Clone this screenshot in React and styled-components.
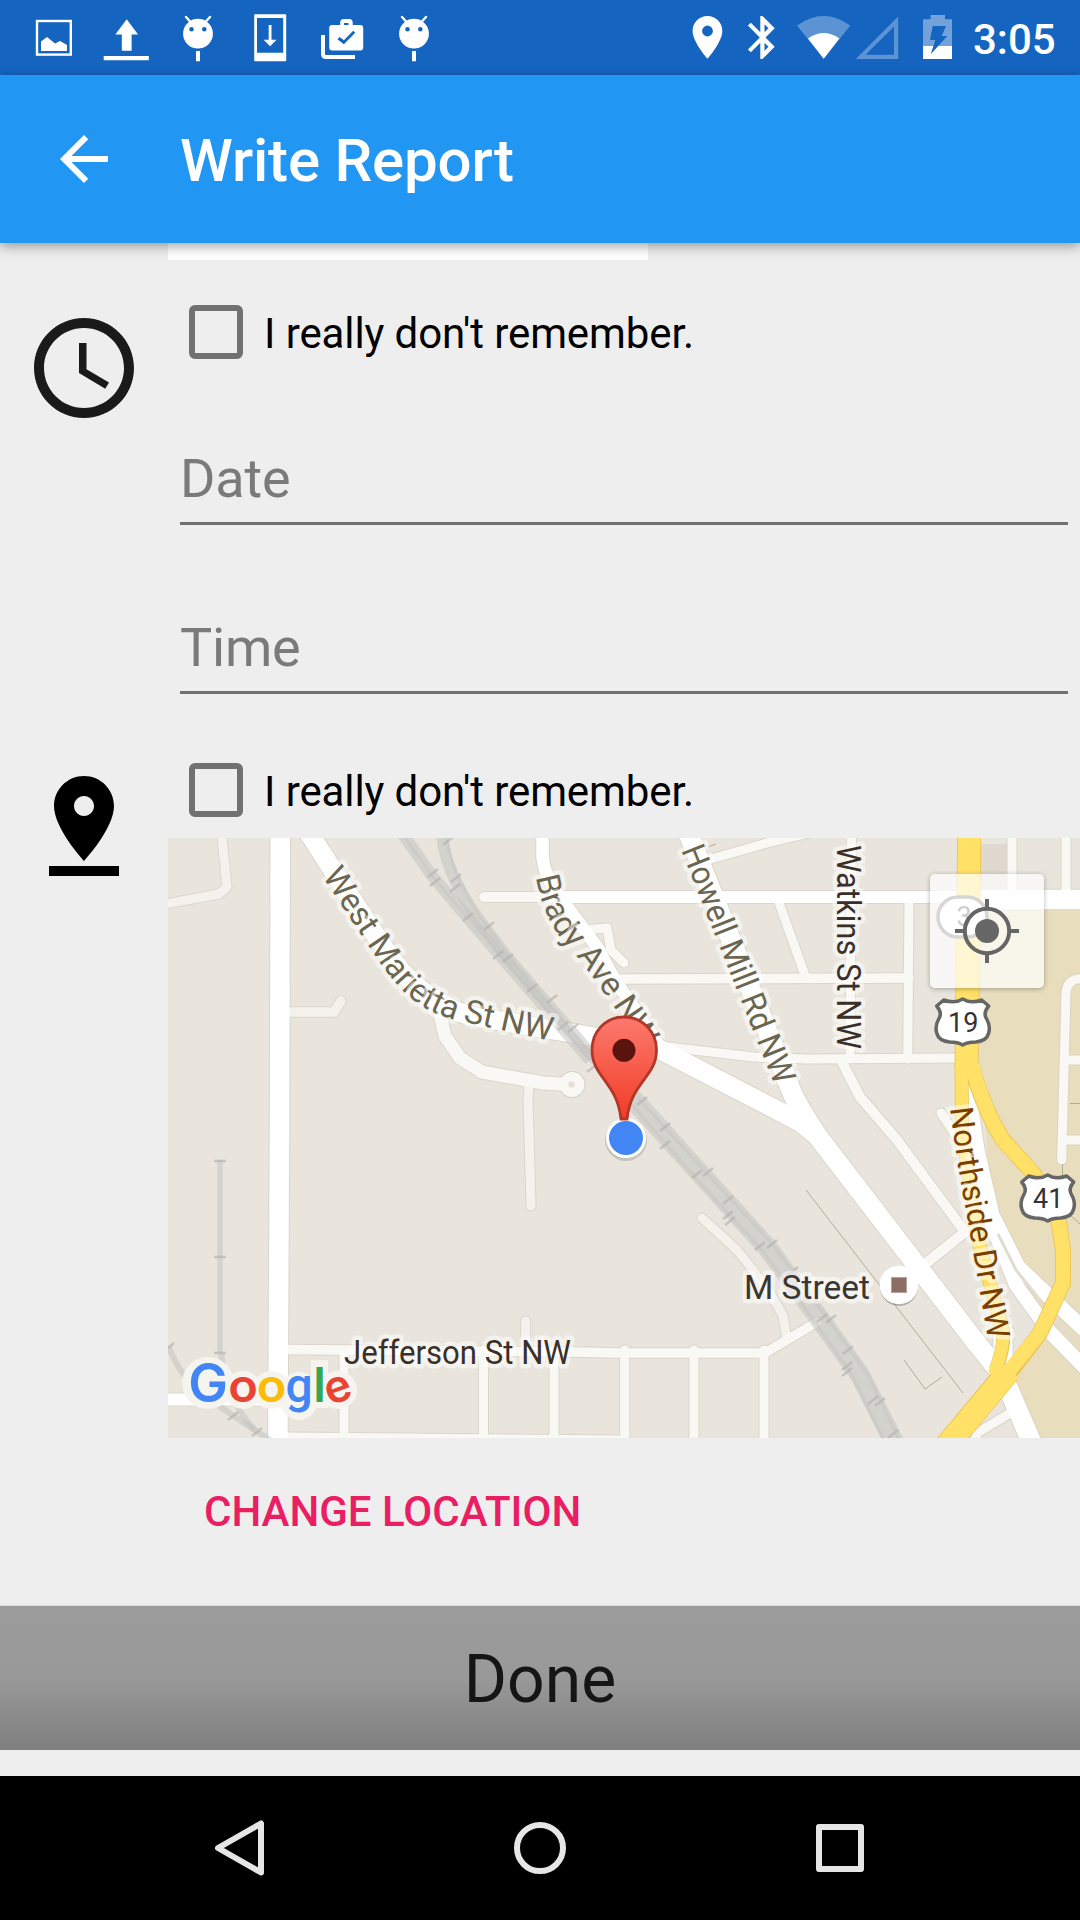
import React from "react";
import styled, { createGlobalStyle } from "styled-components";

const GlobalStyle = createGlobalStyle`
  *, *::before, *::after { box-sizing: border-box; }
  body { margin: 0; background: #eee; font-family: Roboto, "Noto Sans", sans-serif; }
`;

const Screen = styled.div`
  width: 1080px;
  height: 1920px;
  display: flex;
  flex-direction: column;
  overflow: hidden;
  background: #eeeeee;
`;

const StatusBar = styled.header`
  flex: none;
  height: 75px;
  display: flex;
  justify-content: space-between;
  padding: 0 25px 0 18px;
  background: #1565c0;
  color: #fff;
`;

const StatusGroup = styled.div`
  display: flex;
`;

const StatusSvg = styled.svg`
  display: block;
  width: ${(p) => p.$w}px;
  height: 75px;
`;

const Clock = styled.span`
  margin-left: 8px;
  width: 82px;
  font-size: 42px;
  font-weight: 500;
  line-height: 79px;
  white-space: nowrap;
`;

const AppBar = styled.div`
  flex: none;
  height: 168px;
  display: flex;
  align-items: center;
  padding-left: 48px;
  background: #2196f3;
  color: #fff;
  box-shadow: 0 3px 12px rgba(0, 0, 0, 0.38);
  z-index: 1;
`;

const BackIcon = styled.svg`
  width: 72px;
  height: 72px;
`;

const Title = styled.h1`
  margin: 3px 0 0 60px;
  font-size: 60px;
  line-height: 70px;
  font-weight: 500;
  letter-spacing: -0.2px;
`;

const Content = styled.main`
  flex: 1;
  min-height: 0;
  display: flex;
  flex-direction: column;
`;

const PhotoEdge = styled.div`
  flex: none;
  width: 480px;
  height: 17px;
  margin-left: 168px;
  background: #fff;
`;

const Section = styled.section`
  display: grid;
  grid-template-columns: 168px 912px;
  padding-top: ${(p) => p.$top}px;
`;

const SectionIcon = styled.svg`
  width: 120px;
  height: 120px;
  margin: 24px 0 0 24px;
  fill: ${(p) => p.$color};
`;

const CheckRow = styled.label`
  display: flex;
  align-items: center;
  height: 96px;
  padding-left: 21px;
  font-size: 42px;
  line-height: 50px;
  letter-spacing: -0.1px;
  color: #000;
`;

const Box = styled.span`
  width: 54px;
  height: 54px;
  margin-right: 21px;
  border: 6px solid #717171;
  border-radius: 6px;
`;

const CheckText = styled.span`
  padding-top: 4px;
`;

const Field = styled.div`
  height: 145px;
  margin: 0 12px ${(p) => p.$gap || 0}px 12px;
  padding-bottom: 12px;
  display: flex;
  align-items: flex-end;
  border-bottom: 3px solid #717171;
  font-size: 54px;
  line-height: 63px;
  letter-spacing: -0.2px;
  color: #7a7a7a;
`;

const MapFrame = styled.div`
  position: relative;
  width: 912px;
  height: 600px;
  overflow: hidden;
`;

const MapSvg = styled.svg`
  display: block;
  width: 912px;
  height: 600px;
`;

const LocateButton = styled.button`
  position: absolute;
  top: 36px;
  right: 36px;
  width: 114px;
  height: 114px;
  padding: 0;
  border: 0;
  border-radius: 5px;
  background: rgba(255, 255, 255, 0.7);
  box-shadow: 0 1px 5px rgba(0, 0, 0, 0.3);
`;

const TextButton = styled.button`
  display: block;
  margin: 0 0 0 36px;
  padding: 2px 0 0;
  height: 146px;
  border: 0;
  background: none;
  font: 500 42px/50px Roboto, sans-serif;
  color: #e91e63;
`;

const DoneButton = styled.button`
  flex: none;
  height: 144px;
  margin: 22px 0 0;
  padding: 3px 0 0 0;
  border: 0;
  background: linear-gradient(#9b9b9b 0%, #999 50%, #8c8c8c 74%, #7f7f7f 100%);
  box-shadow: 0 -1px 1px rgba(0, 0, 0, 0.08);
  font: 400 66px/78px Roboto, sans-serif;
  color: #151515;
`;

const NavBar = styled.nav`
  flex: none;
  height: 144px;
  display: flex;
  justify-content: center;
  align-items: center;
  gap: 200px;
  background: #000;
`;

const NavSvg = styled.svg`
  width: 100px;
  height: 100px;
  fill: none;
  stroke: #e6e6e6;
  stroke-width: 6;
  stroke-linejoin: round;
`;

/* ---------- status icons ---------- */

const LollipopIcon = () => (
  <StatusSvg $w={72} viewBox="162 0 72 75">
    <path
      fillRule="evenodd"
      fill="#fff"
      d="M198 18.8a14.9 14.9 0 1 1 0 29.8a14.9 14.9 0 1 1 0-29.8zM191.5 27a2.3 2.3 0 1 0 0 4.6a2.3 2.3 0 1 0 0-4.6zM204.3 27a2.3 2.3 0 1 0 0 4.6a2.3 2.3 0 1 0 0-4.6zM196 51h4v10.3h-4z"
    />
    <path d="M186 17l5 5.5M210 17l-5 5.5" stroke="#fff" strokeWidth="2.4" strokeLinecap="round" />
  </StatusSvg>
);

const NotificationIcons = () => (
  <StatusGroup>
    <StatusSvg $w={72} viewBox="18 0 72 75">
      <rect x="37" y="21" width="33.8" height="33.6" fill="none" stroke="#fff" strokeWidth="2.4" />
      <path d="M41 41.5l6-4.5 8 6.5 5-2.5 7 4v6H41z" fill="#fff" />
    </StatusSvg>
    <StatusSvg $w={72} viewBox="90 0 72 75">
      <path d="M126.7 19.2l11.4 15.4h-6.5v16.2h-9.8V34.6h-6.5zM103.7 56h45.1v4.3h-45.1z" fill="#fff" />
    </StatusSvg>
    <LollipopIcon />
    <StatusSvg $w={72} viewBox="234 0 72 75">
      <path
        fillRule="evenodd"
        fill="#fff"
        d="M255 14.3h30.4q.8 0 .8.8v45.3q0 .8-.8.8H255q-.8 0-.8-.8V15.1q0-.8.8-.8zM257 18v34.7h26.2V18zM268.7 25h2.8v14.7h5l-6.4 6.5-6.4-6.5h5z"
      />
    </StatusSvg>
    <StatusSvg $w={72} viewBox="306 0 72 75">
      <path
        fillRule="evenodd"
        fill="#fff"
        d="M332.200 25h8v-2.500q0-3.500 3.500-3.500h5.500q3.500 0 3.500 3.500V25h7.500q3 0 3 3v19.500q0 3-3 3h-28q-3 0-3-3V28q0-3 3-3zM344 23v2h4.500v-2zM339.700 36.900l-2.300 2.400 6.500 5 11.300-11.500-2-2.100-9.300 9.600z"
      />
      <path d="M323 35v19q0 3 3 3h29" fill="none" stroke="#fff" strokeWidth="4" />
    </StatusSvg>
    <LollipopIcon />
  </StatusGroup>
);

const SystemIcons = () => (
  <StatusGroup>
    <StatusSvg $w={53} viewBox="681 0 53 75">
      <path
        fillRule="evenodd"
        fill="#fff"
        d="M707.500 16c-8.300 0-14.900 6.500-14.900 14.900 0 11.100 14.900 27.800 14.900 27.800s14.800-16.700 14.800-27.800C722.300 22.500 715.700 16 707.500 16zM707.500 25.600a5.400 5.400 0 1 1 0 10.800a5.400 5.400 0 1 1 0-10.800z"
      />
    </StatusSvg>
    <StatusSvg $w={54} viewBox="734 0 54 75">
      <path
        fillRule="evenodd"
        fill="#fff"
        d="M774.700 28.200L762.500 16H760.300v16.200L750.800 22.700 747.900 25.600 759.800 37.500 747.900 49.400 750.800 52.300 760.300 42.800V59h2.200L774.700 46.800 765.500 37.500zM764.500 24.200l4 4-4 4zM768.500 46.800l-4 4v-8z"
      />
    </StatusSvg>
    <StatusSvg $w={65} viewBox="788 0 65 75">
      <path d="M797 25.600Q823.700 6.500 850.300 25.600L823.700 58.700z" fill="#fff" fillOpacity=".3" />
      <path d="M808 38.500Q823.700 27.500 839.400 38.500L823.700 58.700z" fill="#fff" />
    </StatusSvg>
    <StatusSvg $w={57} viewBox="853 0 57 75">
      <path fillRule="evenodd" d="M898.200 16.500V59h-42.400zM894 26.500L865.500 54.700H894z" fill="#fff" fillOpacity=".3" />
    </StatusSvg>
    <StatusSvg $w={55} viewBox="910 0 55 75">
      <path
        d="M923 19.300h7.500V15h14.500v4.300h7V46H938.200L947.300 36H941.700L946 26H932.700L930 40H935.300L933.400 46H923z"
        fill="#fff"
        fillOpacity=".4"
      />
      <path d="M923 46H933.400L930.700 54.300L938.200 46H952V59H923z" fill="#fff" />
    </StatusSvg>
    <Clock>3:05</Clock>
  </StatusGroup>
);

/* ---------- map ---------- */

const minorRoads = [
  ["M222 830V838L227 887L219 894L160 905", 9, "#f5f2ed"],
  ["M285 1012H334L341 1001", 9.5, "#f5f2ed"],
  ["M529 1084L528 1100L531 1206", 9, "#f5f2ed"],
  ["M702 1218L737 1250Q770 1290 783 1316L787 1340", 9, "#f5f2ed"],
  ["M525.700 1321V1352", 9, "#f5f2ed"],
  ["M484 897H560", 10, "#f9f8f4"],
  ["M440 1015L445 1036L460 1058L482 1072L543 1083L572 1084.500", 13, "#f9f8f4"],
  ["M583 930L607 928L611 950L624 963", 9, "#f9f8f4"],
  ["M620 979L909 978", 9.500, "#f9f8f4"],
  ["M778 900L806 978", 9, "#f9f8f4"],
  ["M909 900L907.700 1059", 9, "#f9f8f4"],
  ["M660 1046L753 1057L807 1059L957 1058", 9, "#f9f8f4"],
  ["M842 1062L860 1097L897 1140L965 1232L925 1264", 10, "#f9f8f4"],
  ["M704 861L767 843L850 823", 9, "#f9f8f4"],
  ["M851.500 830L850 1058", 9, "#f9f8f4"],
  ["M941 1113L960 1142", 9, "#f9f8f4"],
  ["M1012 830V895", 9, "#f9f8f4"],
  ["M1066 830V895", 9, "#f9f8f4"],
  ["M1085 979Q1068 977 1066 992L1061.700 1160", 9, "#f9f8f4"],
  ["M1065 1060H1090", 9, "#f9f8f4"],
  ["M1063 1140H1090", 9, "#f9f8f4"],
  ["M283 1349.500L573 1352L620 1353H765L817 1322", 9.500, "#f9f8f4"],
  ["M344 1350V1440", 9, "#f9f8f4"],
  ["M483.500 1350V1440", 9, "#f9f8f4"],
  ["M554 1350V1440", 9, "#f9f8f4"],
  ["M624.700 1350V1445", 9, "#f9f8f4"],
  ["M694 1350V1445", 9, "#f9f8f4"],
  ["M764 1350V1445", 9, "#f9f8f4"],
  ["M285 1437L622 1440", 9, "#f9f8f4"],
  ["M1012 1412L977 1433L974 1445", 9, "#f9f8f4"],
];

const whiteRoads = [
  ["M280.300 830L279.500 1130L277.800 1445", 19.500],
  ["M307 830L341 883L392 960Q425 1002 470 1016L595 1037L657 1048L800 1122L815 1134", 19],
  ["M542.500 830V858Q545 878 560 897L597 947L615 980L660 1047", 12.500],
  ["M560 897H985", 12],
  ["M981 899.500H1090", 19.500],
  ["M687 830L793 1095Q805 1118 819 1138L978 1345L1003 1376L1034 1448", 19.500],
  ["M160 1399.500H270", 12],
  ["M968 1090L977 1150L992 1215L1018 1267L1090 1335", 15],
  ["M978 1160L992 1225L1016 1285L1050 1332L1090 1373", 14],
  ["M1003 1330V1358", 19],
];

const railTicks = [
  [433, 873], [435, 882], [468, 917], [498, 955], [508, 958], [532, 988], [552, 999],
  [448, 841], [456, 878], [455, 888], [489, 926], [563, 1026], [573, 1028], [592, 1068],
  [642, 1101], [665, 1127], [665, 1145], [697, 1174], [708, 1172], [728, 1200], [728, 1215], [730, 1221],
  [760, 1246], [772, 1244], [793, 1271], [822, 1318], [831, 1319], [848, 1350], [847, 1366], [847, 1372],
  [873, 1400], [880, 1402], [893, 1434], [233, 1416], [257, 1432], [169, 1347],
];

const Road = ({ d, width, color }) => (
  <path d={d} fill="none" stroke={color} strokeWidth={width} strokeLinecap="round" strokeLinejoin="round" />
);

const Shield = ({ x, y, children }) => (
  <g transform={`translate(${x} ${y})`}>
    <path
      d="M0 -22Q-8 -17 -19 -21L-26 -15Q-20 -8 -24 -2Q-28 5 -26 12Q-24 20 -13 21Q-5 21 0 24Q5 21 13 21Q24 20 26 12Q28 5 24 -2Q20 -8 26 -15L19 -21Q8 -17 0 -22Z"
      fill="#fff"
      stroke="#666"
      strokeWidth="3.500"
      strokeLinejoin="round"
    />
    <text textAnchor="middle" x="0.500" y="11" fontSize="27" fill="#333">
      {children}
    </text>
  </g>
);

const MapLabel = styled.text`
  font-family: Roboto, sans-serif;
  font-size: ${(p) => p.$size || 32}px;
  fill: ${(p) => p.$color};
  stroke: rgba(255, 255, 255, 0.5);
  stroke-width: 9px;
  stroke-linejoin: round;
  paint-order: stroke;
  letter-spacing: ${(p) => p.$spacing || 0}px;
`;

const LogoLetter = styled.text`
  font-family: ${(p) => p.$font}, sans-serif;
  font-size: ${(p) => p.$size}px;
  font-weight: ${(p) => p.$weight};
  fill: ${(p) => p.$color};
  text-anchor: middle;
`;

const logoLetters = [
  ["G", 208, 1402, "#4285f4", "Inter", 53, 600, 0],
  ["o", 243, 1402, "#ea4335", "Inter", 46, 600, 0],
  ["o", 271.5, 1402, "#fbbc05", "Inter", 46, 600, 0],
  ["g", 299, 1402, "#4285f4", "Roboto", 48, 500, 0],
  ["l", 319.5, 1402, "#34a853", "Inter", 48, 600, 0],
  ["e", 338, 1402, "#ea4335", "Inter", 45, 600, -20],
];

const Logo = () => (
  <g>
    <g fill="#f5f4ef">
      <circle cx="208" cy="1383" r="26" />
      <circle cx="243" cy="1390" r="19" />
      <circle cx="271.500" cy="1390" r="19" />
      <circle cx="299" cy="1390" r="18" />
      <circle cx="299" cy="1402" r="18" />
      <rect x="311" y="1360" width="17" height="48" />
      <circle cx="338" cy="1390" r="19" />
    </g>
    {logoLetters.map(([ch, x, y, color, font, size, weight, turn], i) => (
      <LogoLetter
        key={i}
        x={x}
        y={y}
        $color={color}
        $font={font}
        $size={size}
        $weight={weight}
        transform={
          ch === "o"
            ? `translate(${x} 0) scale(1.06 1) translate(${-x} 0)`
            : turn
              ? `rotate(${turn} ${x} ${y - 12.5})`
              : undefined
        }
      >
        {ch}
      </LogoLetter>
    ))}
  </g>
);

const MapView = () => (
  <MapSvg viewBox="168 838 912 600" fontFamily="Roboto, sans-serif">
    <defs>
      <linearGradient id="pinFill" x1="0" y1="0" x2="0" y2="1">
        <stop offset="0" stopColor="#fc7a6d" />
        <stop offset="1" stopColor="#f23c27" />
      </linearGradient>
      <path id="marietta" d="M322 876L366 942Q392 983 412 999Q432 1015 460 1021L560 1043" />
      <path id="brady" d="M536 877Q541 909 558 934Q586 966 614 1007L655 1069" />
      <path id="northside" d="M950 1108Q958 1172 966 1210L994 1375" />
    </defs>
    <rect x="168" y="838" width="912" height="600" fill="#e9e5dc" />
    <rect x="981" y="844" width="27" height="50" fill="#dfd9d0" />
    <path d="M972 905H1080V1438H1036L1005 1378L1050 1335L1012 1280L992 1220L985 1120L967 1060z" fill="#e8ddbd" />

    <g opacity=".75">
      {minorRoads.map(([d, w], i) => (
        <Road key={i} d={d} width={w + 2} color="#d6d1c4" />
      ))}
      {whiteRoads.map(([d, w], i) => (
        <Road key={i} d={d} width={w + 2} color="#d6d1c4" />
      ))}
    </g>
    <circle cx="572" cy="1084.500" r="13.500" fill="#d6d1c4" />
    {minorRoads.map(([d, w, c], i) => (
      <Road key={i} d={d} width={w} color={c} />
    ))}
    <circle cx="572" cy="1084.500" r="12.500" fill="#f9f8f4" />
    <circle cx="571.500" cy="1084.500" r="3.200" fill="#e5e0d6" />
    {whiteRoads.map(([d, w], i) => (
      <Road key={i} d={d} width={w} color="#fff" />
    ))}
    <path d="M998 1234L1016 1270L1040 1300M1052 1318L1077 1343" fill="none" stroke="#e0dcd0" strokeWidth="3" />

    <g fill="none" stroke="#e9c04d">
      <path d="M939 1455L1008 1372" strokeWidth="24.500" />
      <path d="M1004 1380L1040 1333L1052 1307L1063 1283V1250L1059 1223L1048 1195L1033 1173L1003 1140Q984 1110 972 1068" strokeWidth="16" />
      <path d="M969.300 830L966.500 1068" strokeWidth="24" />
      <path d="M961.500 1064L962 1130L978 1240L1003 1330Q1005 1345 996 1370" strokeWidth="14" />
    </g>
    <g fill="none" stroke="#ffe168">
      <path d="M939 1455L1010 1370" strokeWidth="23" />
      <path d="M998 1385L1040 1333L1052 1307L1063 1283V1250L1059 1223L1048 1195L1033 1173L1003 1140Q984 1110 972 1066" strokeWidth="14.500" strokeLinejoin="round" />
      <path d="M969.300 830L966.500 1072" strokeWidth="22.500" />
      <path d="M961.500 1064L962 1130L978 1240L1003 1330Q1005 1345 994 1375" strokeWidth="12.500" />
    </g>

    <g fill="none" stroke="#c0c0be" strokeLinejoin="round">
      <g strokeOpacity=".5">
        <path d="M402 833L433 877L498 953L590 1060" strokeWidth="12" />
        <path d="M442 833Q444 870 477 917L507 957L596 1060" strokeWidth="12" />
        <path d="M632 1098L697 1170L767 1247L822 1322L860 1375L894 1442" strokeWidth="20" />
        <path d="M220 1160V1353" strokeWidth="5.500" />
        <path d="M221 1353Q226 1400 255 1430" strokeWidth="6" />
        <path d="M169 1347Q180 1378 208 1398T270 1440" strokeWidth="6" />
      </g>
      <g strokeOpacity=".35" strokeWidth="3">
        <path d="M405 838L433 877L498 953L590 1060" />
        <path d="M447 838Q450 870 480 917L510 957L590 1052" />
        <path d="M628 1100L692 1174L762 1250L817 1325L852 1375L885 1442" />
        <path d="M638 1098L702 1168L772 1244L827 1318L868 1375L900 1442" />
      </g>
      <g stroke="#b2b2b2" strokeOpacity=".65" strokeWidth="2.500">
        {railTicks.map(([x, y]) => (
          <path key={`${x}-${y}`} d={`M${x - 5} ${y + 4}L${x + 5} ${y - 4}`} />
        ))}
        <path d="M214 1161H226M214 1257H226M214 1353H226" />
      </g>
    </g>

    <g fill="none" stroke="#b1ac96" strokeWidth="1">
      <path d="M806 1190L963 1393M904 1360L925 1389L942 1377M708 847L716 844" />
      <path d="M1070 1103.500H1080M1062.500 1164V1180M1070 1215L1080 1224" />
    </g>

    <MapLabel $color="#6b6650" $size={33} $spacing={-0.35}>
      <textPath href="#marietta">West Marietta St NW</textPath>
    </MapLabel>
    <MapLabel $color="#6b6650" $size={33} $spacing={-0.3}>
      <textPath href="#brady">Brady Ave NW</textPath>
    </MapLabel>
    <MapLabel $color="#6b6650" $size={33} textLength="254" lengthAdjust="spacingAndGlyphs" transform="translate(681 850) rotate(68.300)">
      Howell Mill Rd NW
    </MapLabel>
    <MapLabel $color="#3a3028" $size={33} textLength="204" lengthAdjust="spacingAndGlyphs" transform="translate(836.500 845) rotate(90)">
      Watkins St NW
    </MapLabel>
    <MapLabel $color="#7a3e00" $size={32} $spacing={-0.3}>
      <textPath href="#northside">Northside Dr NW</textPath>
    </MapLabel>
    <MapLabel $color="#3a3028" $size={33} x="344" y="1364" textLength="227" lengthAdjust="spacingAndGlyphs">
      Jefferson St NW
    </MapLabel>
    <MapLabel $color="#3b3632" $size={34} x="744" y="1298.500" textLength="126" lengthAdjust="spacingAndGlyphs">
      M Street
    </MapLabel>

    <circle cx="899" cy="1287" r="19" fill="#000" fillOpacity=".25" />
    <circle cx="899" cy="1285" r="19.300" fill="#fff" />
    <rect x="891.500" y="1277.500" width="15" height="15" fill="#8d6e63" stroke="#b5a19a" />

    <rect x="938" y="897" width="49" height="40" rx="20" fill="#fff" stroke="#777" strokeWidth="3.500" />
    <text x="964" y="926" fontSize="27" textAnchor="middle" fill="#555">
      3
    </text>
    <Shield x={962.7} y={1021}>19</Shield>
    <Shield x={1047.7} y={1197}>41</Shield>

    <circle cx="626" cy="1140" r="21" fill="#000" fillOpacity=".15" />
    <circle cx="626" cy="1138" r="20" fill="#fff" />
    <circle cx="626" cy="1138" r="17" fill="#4285f4" />
    <path
      d="M624 1017C605 1017 592 1032 592 1050C592 1077 617 1082 621 1119H627C631 1082 656.500 1077 656.500 1050C656.500 1032 643 1017 624 1017Z"
      fill="url(#pinFill)"
      stroke="#b23629"
      strokeWidth="2.800"
    />
    <circle cx="624" cy="1050.300" r="11.500" fill="#5a130d" />

    <Logo />
  </MapSvg>
);

const LocateIcon = () => (
  <svg width="114" height="114" viewBox="0 0 114 114" fill="none" stroke="#666" strokeWidth="4" display="block">
    <circle cx="57" cy="57" r="22.200" />
    <circle cx="57" cy="57" r="12" fill="#666" stroke="none" />
    <path d="M57 25v9M57 80v9M25 57h9M80 57h9" />
  </svg>
);

const Unsure = () => (
  <CheckRow>
    <Box />
    <CheckText>I really don't remember.</CheckText>
  </CheckRow>
);

export default function App() {
  return (
    <Screen>
      <GlobalStyle />
      <StatusBar>
        <NotificationIcons />
        <SystemIcons />
      </StatusBar>
      <AppBar>
        <BackIcon viewBox="0 0 24 24">
          <path fill="#fff" d="M20 11H7.830l5.590-5.590L12 4l-8 8 8 8 1.410-1.410L7.830 13H20v-2z" />
        </BackIcon>
        <Title>Write Report</Title>
      </AppBar>
      <Content>
        <PhotoEdge />
        <Section $top={24}>
          <SectionIcon viewBox="0 0 24 24" $color="#1a1a1a">
            <path d="M11.990 2C6.470 2 2 6.480 2 12s4.470 10 9.990 10C17.520 22 22 17.520 22 12S17.520 2 11.990 2zM12 20c-4.420 0-8-3.580-8-8s3.580-8 8-8 8 3.580 8 8-3.580 8-8 8zM12.500 7H11v6l5.250 3.150.75-1.230-4.500-2.670z" />
          </SectionIcon>
          <div>
            <Unsure />
            <Field $gap={24}>Date</Field>
            <Field>Time</Field>
          </div>
        </Section>
        <Section $top={48}>
          <SectionIcon viewBox="0 0 24 24" $color="#000">
            <path d="M18 8c0-3.310-2.690-6-6-6S6 4.690 6 8c0 4.500 6 11 6 11s6-6.500 6-11zm-8 0c0-1.100.9-2 2-2s2 .9 2 2-.89 2-2 2c-1.100 0-2-.9-2-2zM5 20v2h14v-2H5z" />
          </SectionIcon>
          <div>
            <Unsure />
            <MapFrame>
              <MapView />
              <LocateButton aria-label="My location">
                <LocateIcon />
              </LocateButton>
            </MapFrame>
            <TextButton>CHANGE LOCATION</TextButton>
          </div>
        </Section>
        <DoneButton>Done</DoneButton>
      </Content>
      <NavBar>
        <NavSvg viewBox="190 1798 100 100">
          <path d="M261 1823.500V1872.500L218 1848Z" />
        </NavSvg>
        <NavSvg viewBox="490 1798 100 100">
          <circle cx="540" cy="1848" r="23" />
        </NavSvg>
        <NavSvg viewBox="790 1798 100 100">
          <rect x="819" y="1827" width="42" height="42" />
        </NavSvg>
      </NavBar>
    </Screen>
  );
}
